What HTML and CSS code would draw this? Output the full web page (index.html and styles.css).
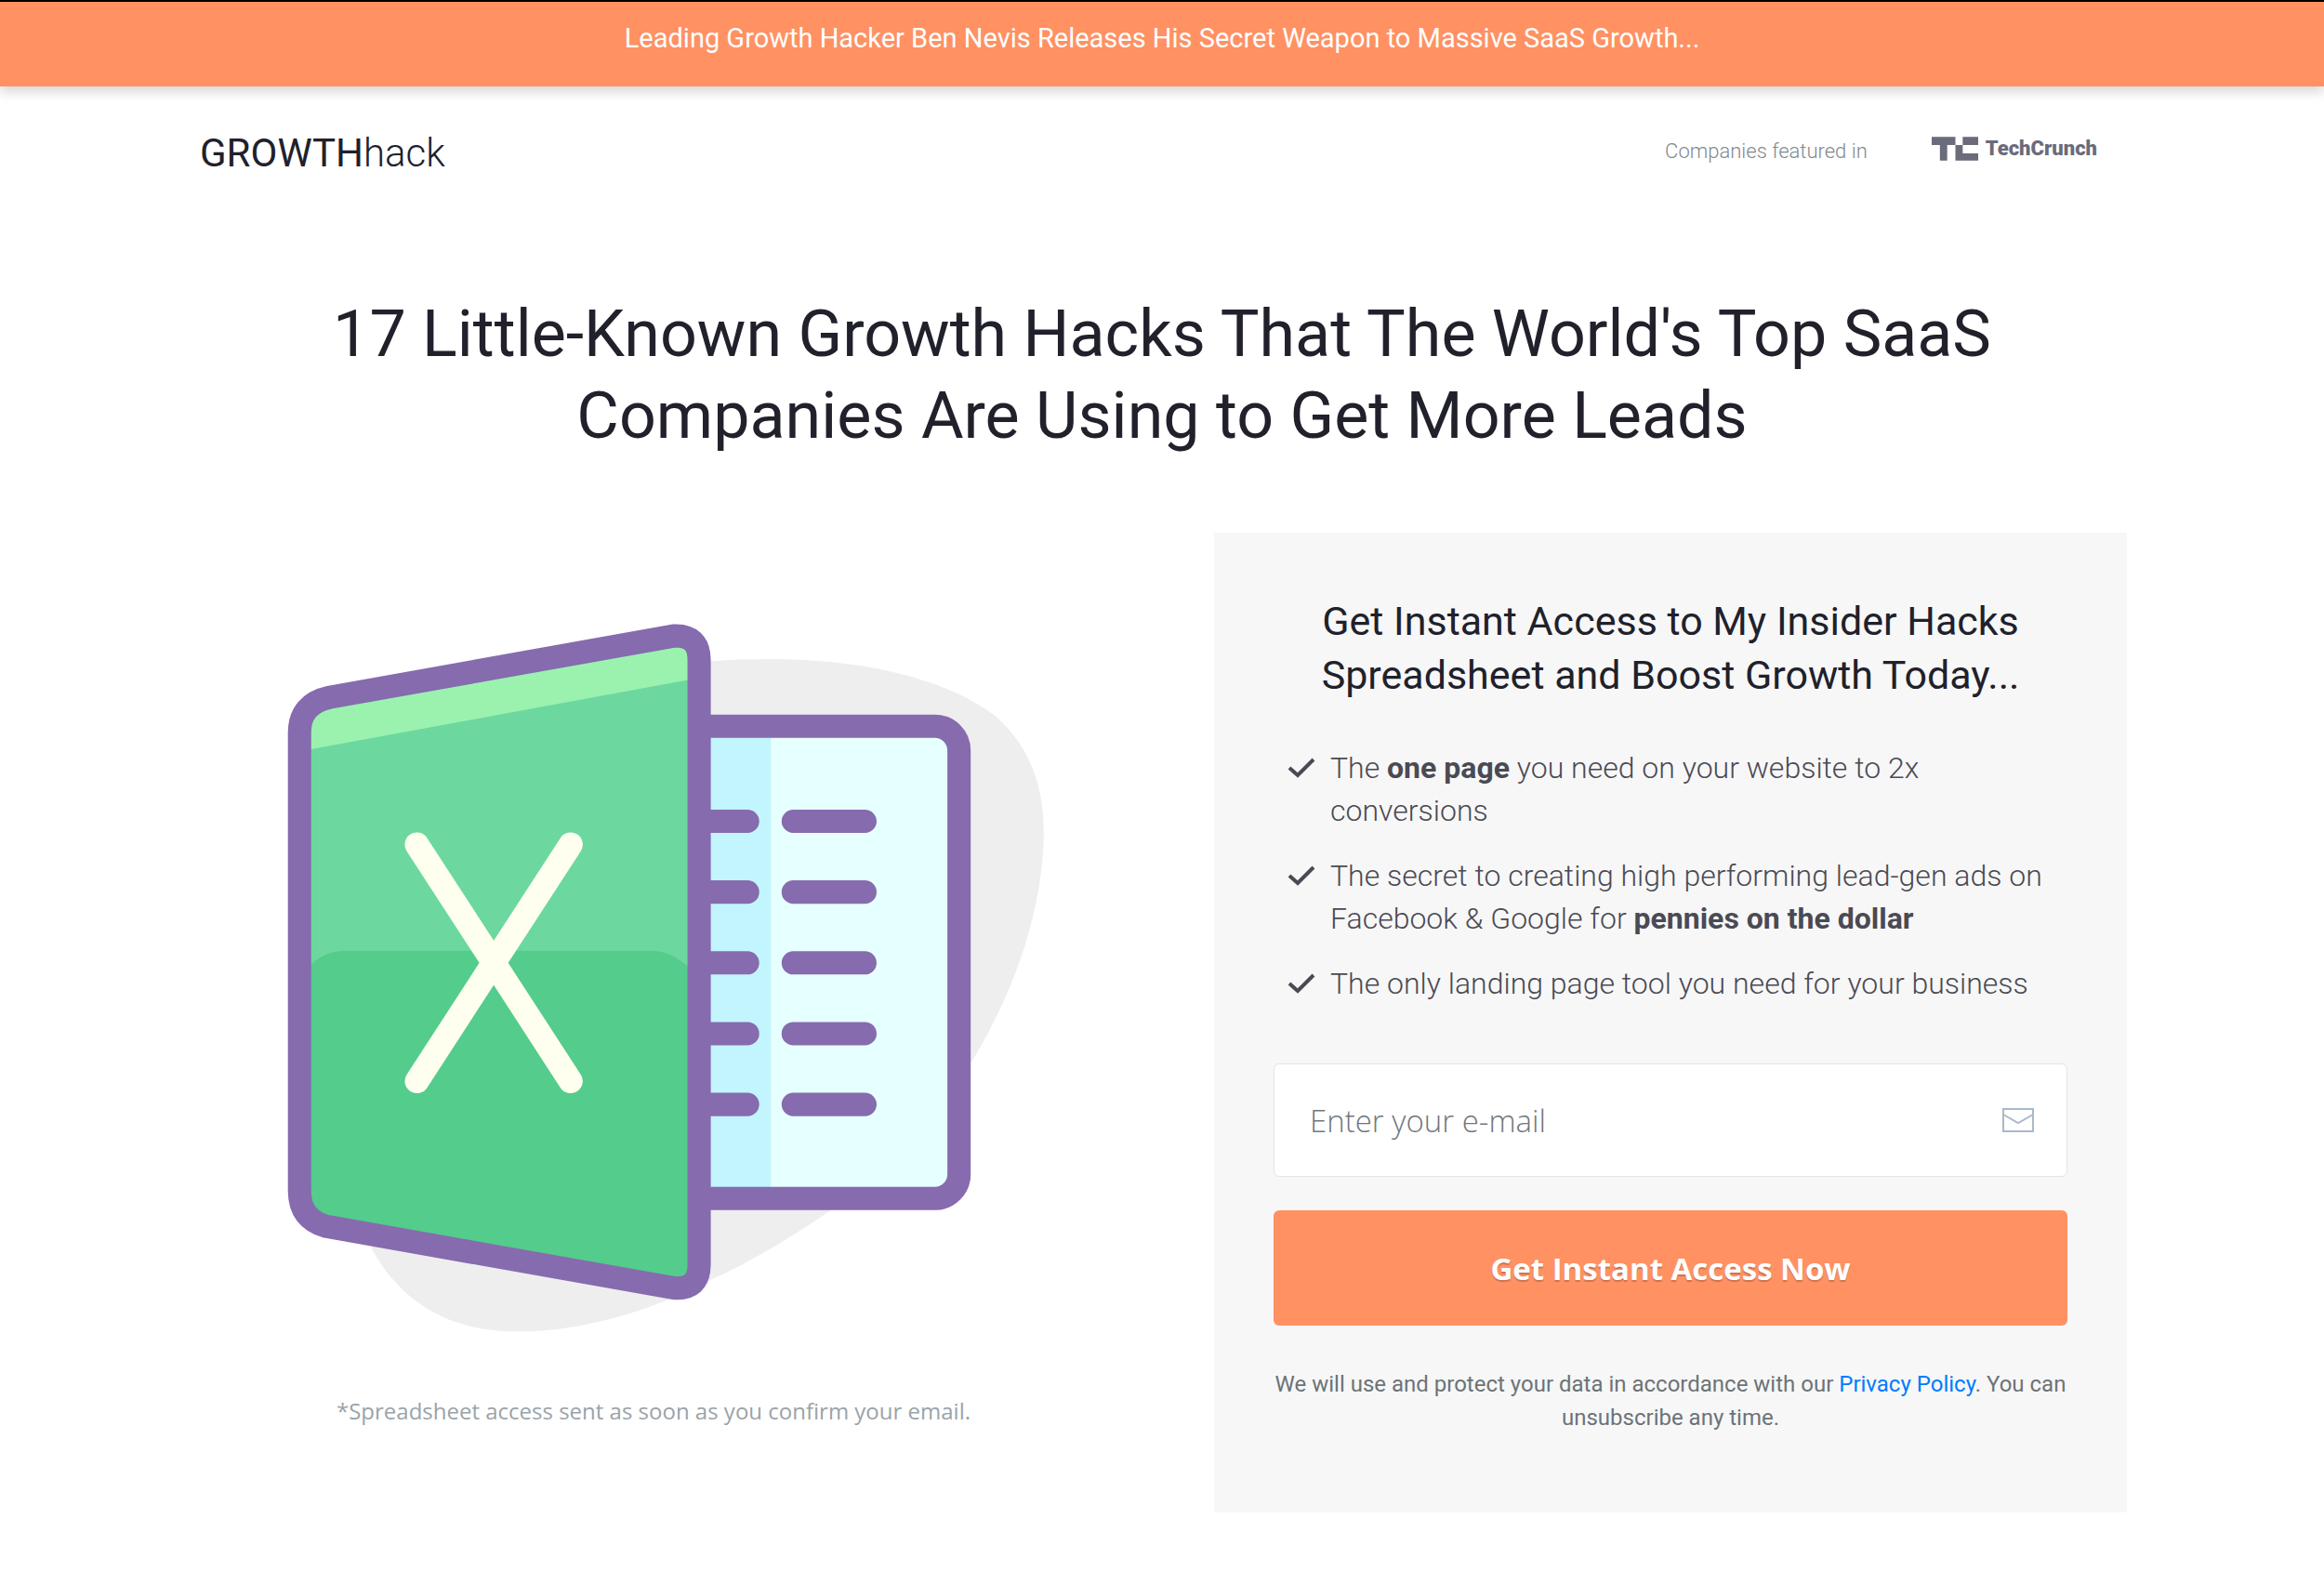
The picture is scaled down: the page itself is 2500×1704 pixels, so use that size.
FILE: index.html
```html
<!DOCTYPE html>
<html lang="en">
<head>
  <meta charset="UTF-8">
  <meta name="viewport" content="width=device-width, initial-scale=1.0">
  <title>GROWTHhack</title>
  <link rel="stylesheet" href="styles.css">
</head>
<body>
  <div class="banner">Leading Growth Hacker Ben Nevis Releases His Secret Weapon to Massive SaaS Growth...</div>

  <header class="header">
    <div class="logo">GROWTH<span>hack</span></div>
    <div class="featured">
      <span>Companies featured in</span>
      <div class="techcrunch">
        <svg width="50" height="26" viewBox="0 0 51 26" aria-hidden="true">
          <path d="M0 0h26v9h-9v17h-8V9H0zM34 0h17v9H34zM26 9h8v9h17v8H26z" fill="#6a6b7b"/>
        </svg>
        <span>TechCrunch</span>
      </div>
    </div>
  </header>

  <main class="main">
    <h1>17 Little-Known Growth Hacks That The World's Top SaaS<br>Companies Are Using to Get More Leads</h1>

    <div class="columns">
      <section class="preview">
        <svg class="illustration" viewBox="-77 0 980 820" role="img" aria-label="Spreadsheet">
          <!-- background blob -->
          <path d="M475 71C600 62 713 80 780 130C820 165 832 210 832 256C831 340 800 425 757 497C715 560 660 620 603 661C560 690 520 715 475 735C420 765 340 791 269 791C200 791 145 765 110 701L300 400Z" fill="#eeeeef"/>
          <!-- page -->
          <path d="M462 141H713A28 28 0 0 1 741 169V620A28 28 0 0 1 713 648H462Z" fill="#e6ffff"/>
          <path d="M470 141H539V648H470Z" fill="#c3f5fe"/>
          <g fill="none" stroke="#866bae" stroke-width="25">
            <path d="M462 141H715A26 26 0 0 1 741 167V622A26 26 0 0 1 715 648H462"/>
            <path d="M462 243H514M462 319H514M462 395H514M462 471H514M462 547H514M563 243H640M563 319H640M563 395H640M563 471H640M563 547H640" stroke-linecap="round"/>
          </g>
          <!-- cover -->
          <path d="M33 148Q33 117 65 110L435 44Q462 43 462 70V719Q462 746 435 744L62 678Q33 670 33 640Z" fill="#6cd89f"/>
          <path d="M33 168V148Q33 117 65 110L435 44Q462 43 462 70V89Z" fill="#9af2ae"/>
          <path d="M33 412Q52 382 82 382H411Q438 382 462 412V719Q462 746 435 744L62 678Q33 670 33 640Z" fill="#54cc8c"/>
          <path d="M33 148Q33 117 65 110L435 44Q462 43 462 70V719Q462 746 435 744L62 678Q33 670 33 640Z" fill="none" stroke="#866bae" stroke-width="25"/>
          <path d="M159 268L324 522M324 268L159 522" fill="none" stroke="#fffff0" stroke-width="26" stroke-linecap="round"/>
        </svg>
        <p class="note">*Spreadsheet access sent as soon as you confirm your email.</p>
      </section>

      <section class="card">
        <h2>Get Instant Access to My Insider Hacks<br>Spreadsheet and Boost Growth Today...</h2>
        <ul class="benefits">
          <li>
            <svg class="check" viewBox="0 0 30 22" aria-hidden="true"><path d="M2 11L11 19L28 2"/></svg>
            <span>The <strong>one page</strong> you need on your website to 2x<br>conversions</span>
          </li>
          <li>
            <svg class="check" viewBox="0 0 30 22" aria-hidden="true"><path d="M2 11L11 19L28 2"/></svg>
            <span>The secret to creating high performing lead-gen ads on<br>Facebook &amp; Google for <strong>pennies on the dollar</strong></span>
          </li>
          <li>
            <svg class="check" viewBox="0 0 30 22" aria-hidden="true"><path d="M2 11L11 19L28 2"/></svg>
            <span>The only landing page tool you need for your business</span>
          </li>
        </ul>
        <form>
          <div class="field">
            <input type="email" placeholder="Enter your e-mail" aria-label="Enter your e-mail">
            <svg width="34" height="26" viewBox="0 0 34 26" aria-hidden="true">
              <path d="M1 1H33V25H1ZM1 7L17 16L33 7"/>
            </svg>
          </div>
          <button type="submit">Get Instant Access Now</button>
        </form>
        <p class="privacy">We will use and protect your data in accordance with our <a href="#">Privacy Policy</a>. You can unsubscribe any time.</p>
      </section>
    </div>
  </main>
</body>
</html>
```
FILE: styles.css
```css
* {
  box-sizing: border-box;
}

body {
  margin: 0;
  font-family: Roboto, "Open Sans", sans-serif;
  background-color: #fff;
  color: #4a4a54;
}

h1, h2, p, ul {
  margin: 0;
}

.banner {
  padding: 19px 24px 31px;
  border-top: 2px solid #000;
  background-color: #ff9163;
  box-shadow: 0 6px 12px rgba(0, 0, 0, 0.16);
  color: #fff;
  font-size: 29px;
  line-height: 41px;
  text-align: center;
}

.header {
  display: flex;
  justify-content: space-between;
  align-items: center;
  padding: 42px 244px 0 215px;
}

.logo {
  color: #20212b;
  font-size: 42px;
  line-height: 60px;
}

.logo span {
  font-weight: 300;
}

.featured {
  display: flex;
  align-items: center;
  gap: 69px;
  padding-bottom: 4px;
  color: #82898e;
  font-size: 22px;
  font-weight: 300;
  line-height: 30px;
}

.techcrunch {
  display: flex;
  align-items: center;
  gap: 8px;
  padding-bottom: 6px;
  color: #6a6b7b;
  font-size: 22px;
  font-weight: 900;
}

.main {
  padding: 120px 212px 76px;
}

h1 {
  color: #20212b;
  font-size: 70px;
  font-weight: 400;
  line-height: 88px;
  text-align: center;
}

.columns {
  display: grid;
  grid-template-columns: 1fr 1fr;
  gap: 112px;
  margin-top: 82px;
}

.preview {
  padding-top: 67px;
  text-align: center;
}

.illustration {
  display: block;
  width: 100%;
}

.note {
  margin-top: 38px;
  color: #9aa3a9;
  font-family: "Open Sans", sans-serif;
  font-size: 24px;
  line-height: 36px;
}

.card {
  padding: 66px 64px 84px;
  background-color: #f7f7f7;
}

h2 {
  color: #20212b;
  font-size: 43px;
  font-weight: 400;
  line-height: 58px;
  text-align: center;
}

.benefits {
  display: grid;
  gap: 24px;
  padding: 48px 0 0 15px;
  list-style: none;
  font-size: 32px;
  font-weight: 300;
  line-height: 46px;
}

.benefits li {
  display: flex;
  gap: 16px;
}

.benefits strong {
  font-weight: 700;
}

.check {
  flex: none;
  width: 30px;
  height: 22px;
  margin-top: 12px;
  fill: none;
  stroke: #4a4a54;
  stroke-width: 4;
}

form {
  display: grid;
  gap: 36px;
  margin-top: 63px;
}

.field {
  display: flex;
  align-items: center;
  padding: 0 35px 0 0;
  border: 1px solid #e4e4e4;
  border-radius: 6px;
  background-color: #fff;
}

.field svg {
  flex: none;
  fill: none;
  stroke: #a9b9cb;
  stroke-width: 2;
}

input {
  flex: 1;
  min-width: 0;
  height: 120px;
  padding: 0 38px;
  border: 0;
  background: none;
  font-family: "Open Sans", sans-serif;
  font-size: 33px;
  font-weight: 300;
}

input::placeholder {
  color: #73777c;
}

button {
  height: 124px;
  border: 0;
  border-radius: 6px;
  background-color: #ff9163;
  color: #fff;
  font-family: "Open Sans", sans-serif;
  font-size: 33px;
  font-weight: 700;
  text-shadow: 0 2px 1px rgba(0, 0, 0, 0.2);
  cursor: pointer;
}

.privacy {
  margin-top: 45px;
  color: #6c7377;
  font-size: 24px;
  line-height: 36px;
  text-align: center;
}

.privacy a {
  color: #007bff;
  text-decoration: none;
}
```
